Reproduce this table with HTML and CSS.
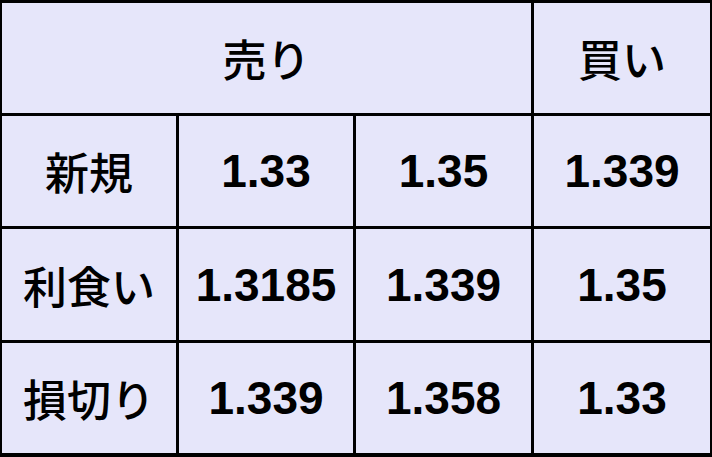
FILE: index.html
```html
<!DOCTYPE html>
<html lang="ja">
<head>
<meta charset="utf-8">
<link rel="stylesheet" href="styles.css">
</head>
<body>
<div class="grid">
  <div class="cell jp span3">売り</div>
  <div class="cell jp">買い</div>
  <div class="cell jp">新規</div>
  <div class="cell num">1.33</div>
  <div class="cell num">1.35</div>
  <div class="cell num">1.339</div>
  <div class="cell jp">利食い</div>
  <div class="cell num">1.3185</div>
  <div class="cell num">1.339</div>
  <div class="cell num">1.35</div>
  <div class="cell jp">損切り</div>
  <div class="cell num">1.339</div>
  <div class="cell num">1.358</div>
  <div class="cell num">1.33</div>
</div>
</body>
</html>
```
FILE: styles.css
```css
html, body {
  margin: 0;
  padding: 0;
  background: #ffffff;
}
.grid {
  width: 712px;
  height: 457px;
  box-sizing: border-box;
  background: #000;
  padding: 3px 2px 4px 2px;
  display: grid;
  grid-template-columns: 174px 174px 175px 176px;
  grid-template-rows: 110px 110px 111px 110px;
  gap: 3px;
}
.cell {
  background: #e6e6fa;
  display: flex;
  align-items: center;
  justify-content: center;
  color: #000;
}
.span3 {
  grid-column: span 3;
}
.jp {
  font-family: "Noto Sans CJK JP", sans-serif;
  font-size: 44px;
  font-weight: 500;
}
.num {
  font-family: "Liberation Sans", Arial, sans-serif;
  font-size: 46px;
  font-weight: 700;
}
```
